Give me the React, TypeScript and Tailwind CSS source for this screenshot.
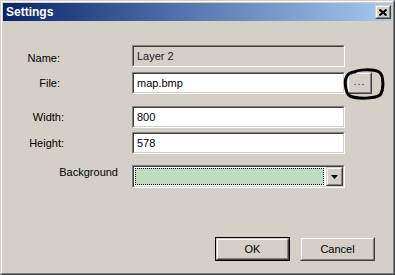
import React from "react";

const sunkenOuter =
  "border border-t-[#808080] border-l-[#808080] border-b-white border-r-white";
const sunkenInner =
  "border border-t-[#404040] border-l-[#404040] border-b-[#d4d0c8] border-r-[#d4d0c8]";
const raisedOuter =
  "border border-t-[#d4d0c8] border-l-[#d4d0c8] border-b-[#404040] border-r-[#404040]";
const raisedInner =
  "border border-t-white border-l-white border-b-[#808080] border-r-[#808080]";

function TextBox({ value, disabled }: { value: string; disabled?: boolean }) {
  return (
    <div className={`${sunkenOuter} w-[213px] h-[22px]`}>
      <div
        className={`${sunkenInner} h-full flex items-center pl-[3px] ${
          disabled ? "bg-[#d4d0c8] text-[#1a1a1a]" : "bg-white text-black"
        }`}
      >
        {value}
      </div>
    </div>
  );
}

function Button({ label, primary }: { label: string; primary?: boolean }) {
  return (
    <div
      className={`w-[75px] h-[24px] ${
        primary ? "border border-black" : ""
      }`}
    >
      <div className={`${raisedOuter} h-full`}>
        <div className={`${raisedInner} h-full flex items-center justify-center text-black`}>
          {label}
        </div>
      </div>
    </div>
  );
}

export default function App() {
  return (
    <div className="w-[395px] h-[275px] bg-[#d4d0c8] font-['Liberation_Sans',Arial,sans-serif] text-[11px] leading-none">
      <div className={`${raisedOuter} w-full h-full`}>
        <div className={`${raisedInner} w-full h-full p-[1px] flex flex-col`}>
          {/* caption */}
          <div className="h-[18px] flex items-center justify-between pl-[3px] pr-[1px] bg-gradient-to-r from-[#0a246a] via-[#5a7ab2] to-[#a6caf0]">
            <span className="text-white font-bold text-[12px]">Settings</span>
            <div className={`${raisedOuter} w-[16px] h-[14px]`}>
              <div className={`${raisedInner} h-full bg-[#d4d0c8] flex items-center justify-center`}>
                <svg width="8" height="7" viewBox="0 0 8 7">
                  <path d="M0.5 0.5 L7.5 6.5 M7.5 0.5 L0.5 6.5" stroke="black" strokeWidth="2" />
                </svg>
              </div>
            </div>
          </div>

          {/* body */}
          <div className="relative flex flex-col text-black">
            <div className="flex mt-[24px]">
              <div className="w-[129px] pr-[72px] pt-[8px] text-right">Name:</div>
              <TextBox value="Layer 2" disabled />
            </div>

            <div className="flex mt-[5px]">
              <div className="w-[129px] pr-[72px] pt-[6px] text-right">File:</div>
              <TextBox value="map.bmp" />
              <div className={`${raisedOuter} ml-[2px] w-[25px] h-[22px]`}>
                <div className={`${raisedInner} h-full flex items-end justify-center pb-[5px] tracking-[1px] text-[#333]`}>
                  ...
                </div>
              </div>
            </div>

            <div className="flex mt-[12px]">
              <div className="w-[129px] pr-[68px] pt-[6px] text-right">Width:</div>
              <TextBox value="800" />
            </div>

            <div className="flex mt-[4px]">
              <div className="w-[129px] pr-[68px] pt-[6px] text-right">Height:</div>
              <TextBox value="578" />
            </div>

            <div className="flex mt-[11px]">
              <div className="w-[129px] pr-[14px] pt-[2px] text-right">Background</div>
              <div className={`${sunkenOuter} w-[213px] h-[23px]`}>
                <div className={`${sunkenInner} h-full flex bg-white`}>
                  <div className="flex-1 m-[1px] border border-dotted border-black bg-[#c0dcc0]" />
                  <div className={`${raisedOuter} ml-[1px] w-[17px] h-full`}>
                    <div className={`${raisedInner} h-full bg-[#d4d0c8] flex items-center justify-center`}>
                      <svg width="7" height="4" viewBox="0 0 7 4">
                        <path d="M0 0 H7 L3.5 4 Z" fill="black" />
                      </svg>
                    </div>
                  </div>
                </div>
              </div>
            </div>

            <div className="flex mt-[49px] ml-[212px] gap-[10px]">
              <Button label="OK" primary />
              <Button label="Cancel" />
            </div>

            {/* hand-drawn circle annotation */}
            <svg
              className="absolute left-[340px] top-[47px]"
              width="42"
              height="32"
              viewBox="0 0 42 32"
            >
              <path
                d="M8 5 C16 1 30 1 36 4 C41 7 41 22 37 27 C31 31 14 31 7 28 C2 25 1 12 4 8 C6 5 9 4 12 4"
                fill="none"
                stroke="black"
                strokeWidth="3"
                strokeLinecap="round"
              />
            </svg>
          </div>
        </div>
      </div>
    </div>
  );
}
